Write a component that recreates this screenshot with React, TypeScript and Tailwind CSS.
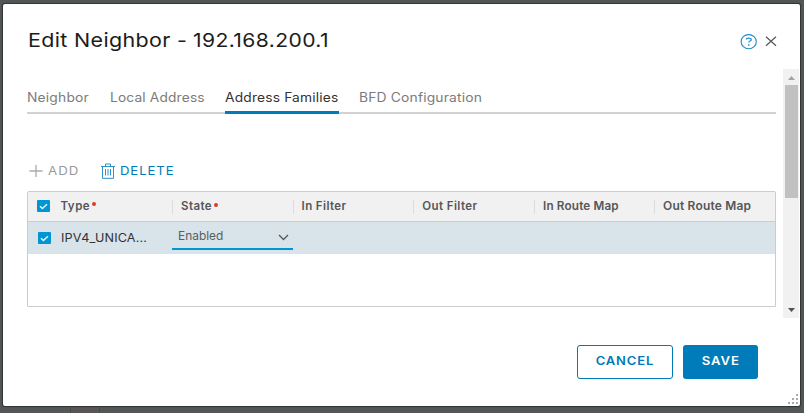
const tabs = [
  { label: 'Neighbor', cls: 'w-[62px] mr-[21px] text-[#7c7c7c]', text: 'scale-x-[1.1]' },
  { label: 'Local Address', cls: 'w-[95px] mr-[20px] text-[#7c7c7c]', text: 'scale-x-[1.09]' },
  { label: 'Address Families', cls: 'w-[114px] mr-[20px] text-[#333] shadow-[inset_0_-3px_0_#007cbb]', text: 'scale-x-[1.095]' },
  { label: 'BFD Configuration', cls: 'w-[123px] text-[#7c7c7c]', text: 'scale-x-[1.1]' },
];

const columns = [
  { label: 'State', required: true, cls: 'tracking-[0.4px]' },
  { label: 'In Filter', required: false, cls: 'tracking-[0.38px]' },
  { label: 'Out Filter', required: false, cls: 'tracking-[0.42px]' },
  { label: 'In Route Map', required: false, cls: 'tracking-[0.15px] scale-x-[1.02]' },
  { label: 'Out Route Map', required: false, cls: 'tracking-[0.2px] scale-x-[1.04]' },
];

function Check() {
  return (
    <span className="flex h-3 w-[13px] shrink-0 items-center justify-center rounded-[1px] bg-[#0095d3]">
      <svg width="9" height="7" viewBox="0 0 9 7" fill="none" stroke="#e8f6fc" strokeWidth="1.5">
        <path d="M1 3.2 3.4 5.5 8 1.2" />
      </svg>
    </span>
  );
}

function Dot() {
  return <span className="mb-[4px] ml-[2px] h-1 w-1 rounded-full bg-[#dc3b26]" />;
}

export default function App() {
  return (
    <div className="h-[413px] w-[804px] overflow-hidden bg-[#525656] pt-1 pl-[3px] font-['Inter',sans-serif]">
      <div className="relative flex h-[402px] w-[797px] flex-col rounded-[2px] bg-white shadow-[0_0_1px_1px_#303333]">
        <header className="flex h-[65px] shrink-0 items-start pl-[25px]">
          <h1 className="mt-[22px] flex w-[712px] text-[19px] leading-[30px] whitespace-nowrap text-[#1c1c1c]">
            <span className="w-[165px] origin-left scale-x-[1.13] tracking-[0.3px]">Edit Neighbor - </span>
            <span className="origin-left scale-x-[1.11] tracking-[0.35px]">192.168.200.1</span>
          </h1>
          <svg className="mt-[29px]" width="18" height="17" viewBox="0 0 18 17" fill="none" stroke="#1c8dc8">
            <ellipse cx="8.7" cy="8.7" rx="7.6" ry="7.1" strokeWidth="1.1" />
            <path d="M6 6.3C6.9 5.3 7.9 5 8.9 5.1c1.5.1 2.4.7 2.4 1.6 0 1.4-2.5 1.3-2.5 2.9" strokeWidth="1.2" />
            <path d="M8.1 12h1.4" strokeWidth="1.3" />
          </svg>
          <svg className="mt-8 ml-[7px]" width="12" height="11" viewBox="0 0 12 11" stroke="#555" strokeWidth="1.2">
            <path d="m1 .8 10 9M11 .8l-10 9" />
          </svg>
        </header>

        <div className="flex h-[249px] shrink-0">
          <main className="w-[780px] pt-[14px] pl-6">
            <nav className="flex h-[31px] w-[749px] text-[12.6px] leading-5 whitespace-nowrap shadow-[inset_0_-2px_0_#d2d2d2]">
              {tabs.map((t) => (
                <div key={t.label} className={`h-[31px] pt-[5px] ${t.cls}`}>
                  <span className={`inline-block origin-left tracking-[0.15px] ${t.text}`}>{t.label}</span>
                </div>
              ))}
            </nav>

            <div className="mt-[45px] flex h-6 items-center text-[11.5px]">
              <svg className="ml-[2px]" width="14" height="14" viewBox="0 0 14 14" stroke="#aaa" strokeWidth="1.3">
                <path d="M7 1v12M.5 7h13" />
              </svg>
              <span className="ml-[5px] w-[53px] origin-left scale-x-[1.15] pt-[2px] tracking-[0.9px] text-[#9a9a9a]">ADD</span>
              <svg width="14" height="16" viewBox="0 0 14 16" fill="none" stroke="#1486c1">
                <path d="M0 3.5h14M1.5 3.5v11.8h11V3.5M4.5 3.2V1h5v2.2M4.5 6v6.5M7 6v6.5M9.5 6v6.5" strokeWidth=".9" />
              </svg>
              <span className="ml-[5px] origin-left scale-x-[1.14] pt-[2px] tracking-[0.8px] text-[#0079b8]">DELETE</span>
            </div>

            <section className="mt-[8px] h-[116px] w-[749px] rounded-t-[2px] border border-[#ccc]">
              <div className="flex h-[30px] items-center border-b border-[#ccc] bg-[#f1f1f1] text-[11.5px] font-semibold text-[#565656]">
                <div className="flex w-[144px] items-center pb-px pl-[8.5px]">
                  <Check />
                  <span className="ml-[11px] pt-[2px] tracking-[0.5px]">Type</span>
                  <Dot />
                </div>
                {columns.map((c) => (
                  <div key={c.label} className="flex h-[14px] w-[120.6px] shrink-0 items-center border-l border-[#ddd] pl-2 whitespace-nowrap last:w-[118px]">
                    <span className={`origin-left ${c.cls}`}>{c.label}</span>
                    {c.required && <Dot />}
                  </div>
                ))}
              </div>
              <div className="flex h-8 bg-[#d9e4ea]">
                <div className="flex w-[144px] items-center pl-[9.5px]">
                  <Check />
                  <span className="ml-[10.5px] origin-left scale-x-[1.07] pt-[2px] text-[11.8px] tracking-[0.15px] text-[#333]">IPV4_UNICA...</span>
                </div>
                <div className="mt-[3px] flex h-[25px] w-[121px] items-center justify-between border-b-2 border-[#0095d3] pr-1 pl-[6px]">
                  <span className="origin-left scale-x-[1.02] pt-px text-[11.7px] text-[#565f64]">Enabled</span>
                  <svg className="mt-px" width="11" height="7" viewBox="0 0 11 7" fill="none" stroke="#565656" strokeWidth="1.3">
                    <path d="m1 1 4.5 4.5L10 1" />
                  </svg>
                </div>
              </div>
            </section>
          </main>

          <aside className="flex w-4 flex-col items-center bg-[#f1f1f1]">
            <svg className="mt-[7px]" width="7" height="4" viewBox="0 0 7 4" fill="#a3a3a3">
              <path d="M0 4 3.5 0 7 4Z" />
            </svg>
            <div className="mt-[5px] h-[113px] w-[13px] bg-[#c1c1c1]" />
            <svg className="mt-auto mb-[6px]" width="7" height="4" viewBox="0 0 7 4" fill="#505050">
              <path d="m0 0 3.5 4L7 0Z" />
            </svg>
          </aside>
        </div>

        <footer className="mt-[27px] flex gap-[10px] pl-[574px] text-[11.5px] font-semibold">
          <button className="h-[34px] w-24 rounded-[3px] border border-[#0079b8] pb-px text-[#0079b8]">
            <span className="inline-block scale-x-[1.13] tracking-[0.75px]">CANCEL</span>
          </button>
          <button className="h-[34px] w-[75px] rounded-[3px] bg-[#007cbb] pb-px text-white">
            <span className="inline-block scale-x-[1.14] tracking-[0.8px]">SAVE</span>
          </button>
        </footer>
        <svg className="absolute right-[2px] bottom-[2px]" width="10" height="10" viewBox="0 0 10 10" fill="#aaa">
          <path d="M8 0h2v2H8zM4 4h2v2H4zM8 4h2v2H8zM0 8h2v2H0zM4 8h2v2H4zM8 8h2v2H8z" />
        </svg>
      </div>
      <div className="mt-[2px] ml-[67px] h-[5px] w-[30px] border-x border-[#484646] bg-[#595555]" />
    </div>
  );
}
